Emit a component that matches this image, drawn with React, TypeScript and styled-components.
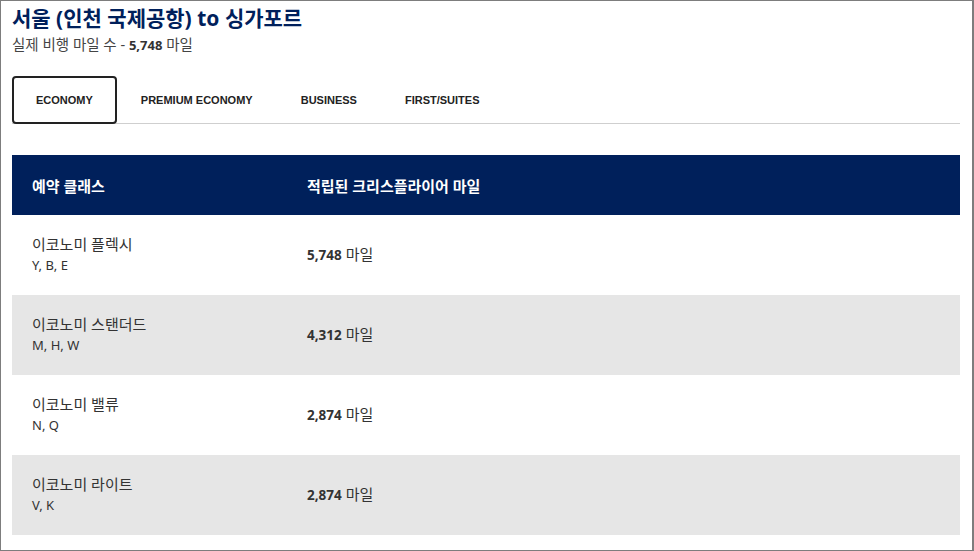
import styled, { createGlobalStyle } from "styled-components";

const GlobalStyle = createGlobalStyle`
  html, body {
    margin: 0;
    padding: 0;
    background: #fff;
  }
  body {
    font-family: "Noto Sans", "Noto Sans CJK KR", sans-serif;
    color: #333;
  }
`;

const Frame = styled.div`
  box-sizing: border-box;
  width: 974px;
  height: 551px;
  border: 1px solid #7d7d7d;
  border-right-width: 2px;
  padding: 3px 12px 0 11px;
  overflow: hidden;
`;

const Title = styled.h1`
  margin: 0;
  font-size: 21px;
  line-height: 28px;
  font-weight: 700;
  color: #00205b;
`;

const Subtitle = styled.p`
  margin: 2px 0 0;
  font-size: 14.5px;
  line-height: 20px;
  color: #444;

  strong {
    font-size: 13px;
    font-weight: 700;
    color: #333;
  }
`;

const Tabs = styled.div`
  display: flex;
  margin-top: 21px;
  border-bottom: 1px solid #cfcfcf;
`;

const Tab = styled.button<{ $active?: boolean }>`
  box-sizing: border-box;
  height: 48px;
  padding: 0 22px;
  margin-bottom: -1px;
  background: ${(p) => (p.$active ? "#fff" : "transparent")};
  border: 2px solid ${(p) => (p.$active ? "#222" : "transparent")};
  border-radius: 4px;
  font-family: "Liberation Sans", "Noto Sans", sans-serif;
  font-size: 11px;
  font-weight: 700;
  color: #222;
  text-transform: uppercase;
  cursor: pointer;
`;

const Table = styled.div`
  margin-top: 31px;
`;

const HeadRow = styled.div`
  display: grid;
  grid-template-columns: 275px 1fr;
  height: 60px;
  align-items: center;
  background: #00205b;
  color: #fff;
  font-size: 15px;
  font-weight: 700;
  padding-left: 20px;
`;

const Row = styled.div<{ $shaded?: boolean }>`
  box-sizing: border-box;
  display: grid;
  grid-template-columns: 275px 1fr;
  height: 80px;
  align-items: center;
  padding: 0 0 3px 20px;
  background: ${(p) => (p.$shaded ? "#e6e6e6" : "#fff")};
`;

const ClassName = styled.div`
  font-size: 15px;
  line-height: 20px;
  color: #333;
`;

const Codes = styled.div`
  margin-top: 3px;
  font-size: 13px;
  line-height: 16px;
  color: #333;
`;

const Miles = styled.div`
  font-size: 15px;
  color: #333;

  strong {
    font-size: 13.5px;
    font-weight: 700;
  }
`;

const tabs = ["Economy", "Premium Economy", "Business", "First/Suites"];

const rows = [
  { name: "이코노미 플렉시", codes: "Y, B, E", miles: "5,748" },
  { name: "이코노미 스탠더드", codes: "M, H, W", miles: "4,312" },
  { name: "이코노미 밸류", codes: "N, Q", miles: "2,874" },
  { name: "이코노미 라이트", codes: "V, K", miles: "2,874" },
];

export default function App() {
  return (
    <>
      <GlobalStyle />
      <Frame>
        <Title>서울 (인천 국제공항) to 싱가포르</Title>
        <Subtitle>
          실제 비행 마일 수 - <strong>5,748</strong> 마일
        </Subtitle>
        <Tabs>
          {tabs.map((t, i) => (
            <Tab key={t} $active={i === 0}>
              {t}
            </Tab>
          ))}
        </Tabs>
        <Table>
          <HeadRow>
            <div>예약 클래스</div>
            <div>적립된 크리스플라이어 마일</div>
          </HeadRow>
          {rows.map((r, i) => (
            <Row key={r.name} $shaded={i % 2 === 1}>
              <div>
                <ClassName>{r.name}</ClassName>
                <Codes>{r.codes}</Codes>
              </div>
              <Miles>
                <strong>{r.miles}</strong> 마일
              </Miles>
            </Row>
          ))}
        </Table>
      </Frame>
    </>
  );
}
